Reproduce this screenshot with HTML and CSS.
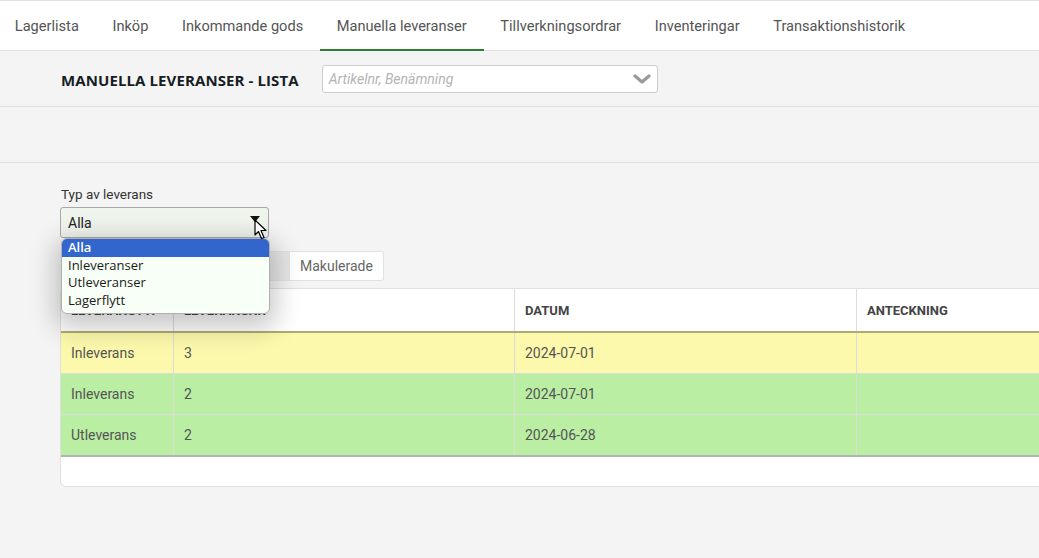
FILE: index.html
```html
<!DOCTYPE html>
<html>

<head>
  <title>Manuella leveranser</title>
  <meta name="viewport" content="width=device-width, initial-scale=1" />
  <link rel="stylesheet" href="styles.css">
</head>

<body>

  <nav class="tabs">
    <a class="tab">Lagerlista</a>
    <a class="tab">Inköp</a>
    <a class="tab">Inkommande gods</a>
    <a class="tab active">Manuella leveranser</a>
    <a class="tab">Tillverkningsordrar</a>
    <a class="tab">Inventeringar</a>
    <a class="tab">Transaktionshistorik</a>
  </nav>

  <div class="band header-band">
    <h1 class="page-title">MANUELLA LEVERANSER - LISTA</h1>
    <div class="search">
      <span class="placeholder">Artikelnr, Benämning</span>
      <svg class="chevron" width="18" height="12" viewBox="0 0 18 12">
        <path d="M2 3 L9 9 L16 3" fill="none" stroke="#9a9a9a" stroke-width="3.2" stroke-linecap="round" stroke-linejoin="round" />
      </svg>
    </div>
  </div>

  <div class="band empty-band"></div>

  <main class="content">
    <div class="filter">
      <label class="filter-label">Typ av leverans</label>
      <div class="select-wrap">
        <div class="select">
          <span>Alla</span>
          <svg class="select-arrow" width="10" height="6" viewBox="0 0 10 6">
            <path d="M0 0 H10 L5 6 Z" fill="#111" />
          </svg>
        </div>
        <!-- open native dropdown -->
        <ul class="options">
          <li class="selected">Alla</li>
          <li>Inleveranser</li>
          <li>Utleveranser</li>
          <li>Lagerflytt</li>
        </ul>
        <svg class="cursor" width="14" height="21" viewBox="0 0 14 21">
          <path d="M1 1 L1 16 L4.5 12.5 L7.5 19.5 L10 18.5 L7 11.5 L12 11.5 Z" fill="#fff" stroke="#000" stroke-width="1.2" stroke-linejoin="round" />
        </svg>
      </div>
    </div>

    <div class="btn-group">
      <button class="btn">Aktiva</button>
      <button class="btn active">Alla</button>
      <button class="btn">Makulerade</button>
    </div>

    <div class="card">
      <table class="list">
        <thead>
          <tr>
            <th class="c1">LEVERANSTYP</th>
            <th class="c2">LEVERANSNR</th>
            <th class="c3">DATUM</th>
            <th class="c4">ANTECKNING</th>
          </tr>
        </thead>
        <tbody>
          <tr class="pending">
            <td>Inleverans</td>
            <td>3</td>
            <td>2024-07-01</td>
            <td></td>
          </tr>
          <tr class="done">
            <td>Inleverans</td>
            <td>2</td>
            <td>2024-07-01</td>
            <td></td>
          </tr>
          <tr class="done">
            <td>Utleverans</td>
            <td>2</td>
            <td>2024-06-28</td>
            <td></td>
          </tr>
        </tbody>
      </table>
    </div>
  </main>

</body>

</html>
```

FILE: styles.css
```css
html {
  background-color: #f4f4f4;
  overflow: hidden;
}

body {
  margin: 0;
  width: 100vw;
  height: 100vh;
  overflow: hidden;
  font-family: Roboto, "Liberation Sans", sans-serif;
  color: #555;
}

.tabs {
  display: flex;
  height: 49px;
  background-color: #fff;
  border-top: 1px solid #e2e2e2;
  border-bottom: 1px solid #e2e2e2;
  margin-left: -2px;
}

.tab {
  display: flex;
  align-items: center;
  padding: 0 16.8px;
  font-size: 14.6px;
  color: #555;
  border-bottom: 2px solid transparent;
  margin-bottom: -1px;
  padding-top: 1px;
}

.tab.active {
  border-bottom-color: #2e7d32;
}

.band {
  height: 55px;
  border-bottom: 1px solid #e0e0e0;
  background-color: #f4f4f4;
}

.header-band {
  display: flex;
  align-items: center;
  padding-left: 61px;
}

.page-title {
  margin: 0 23px 0 0;
  font-family: "Open Sans", sans-serif;
  font-size: 15px;
  font-weight: 700;
  color: #161e24;
  letter-spacing: 0.1px;
  padding-top: 2px;
}

.search {
  width: 322px;
  height: 26px;
  background-color: #fff;
  border: 1px solid #ccc;
  border-radius: 3px;
  display: flex;
  align-items: center;
  justify-content: space-between;
  padding: 0 6px 0 6px;
  box-sizing: content-box;
}

.placeholder {
  font-style: italic;
  font-size: 14px;
  color: #b4b4b4;
}

.chevron {
  margin-top: 1px;
}

.content {
  padding: 23px 0 0 60px;
}

.filter-label {
  display: block;
  font-size: 13.5px;
  color: #333;
  margin-left: 1px;
  margin-bottom: 5px;
}

.select-wrap {
  position: relative;
  width: 209px;
}

.select {
  height: 29px;
  border: 1px solid #a9a9a9;
  border-radius: 3px;
  background-color: #eff4ed;
  display: flex;
  align-items: center;
  justify-content: space-between;
  padding: 0 7px 0 7px;
  font-size: 14px;
  color: #222;
}

.select-arrow {
  margin-top: -8px;
  margin-right: 1px;
}

.options {
  position: absolute;
  top: 31px;
  left: 1px;
  width: 207px;
  margin: 0;
  padding: 0 0 4px 0;
  list-style: none;
  background-color: #f8fff6;
  border: 1px solid #b0b0b0;
  border-radius: 6px;
  box-shadow: 0 8px 26px 6px rgba(0, 0, 0, 0.22);
  overflow: hidden;
  z-index: 10;
  font-family: "Open Sans", sans-serif;
  font-size: 13px;
  color: #1a1a1a;
}

.options li {
  height: 17.5px;
  line-height: 17.5px;
  padding-left: 6px;
}

.options li.selected {
  background-color: #3366cc;
  color: #fff;
  font-weight: 600;
}

.cursor {
  position: absolute;
  top: 12px;
  left: 194px;
  z-index: 11;
}

.btn-group {
  display: flex;
  margin-top: 13px;
  margin-left: 50px;
}

.btn {
  height: 30px;
  min-width: 90px;
  padding: 0 10px;
  font-family: Roboto, sans-serif;
  font-size: 14px;
  color: #666;
  background-color: #fff;
  border: 1px solid #e2e2e2;
  border-left: none;
  border-radius: 0;
}

.btn:first-child {
  border-left: 1px solid #e2e2e2;
  border-radius: 3px 0 0 3px;
}

.btn:last-child {
  border-radius: 0 3px 3px 0;
  min-width: 91px;
}

.btn.active {
  background-color: #e6e6e6;
}

.card {
  margin-top: 7px;
  width: 1200px;
  height: 197px;
  background-color: #fff;
  border: 1px solid #e0e0e0;
  border-radius: 6px;
  overflow: hidden;
}

.list {
  border-collapse: collapse;
  table-layout: fixed;
  width: 100%;
}

.list th {
  height: 41px;
  text-align: left;
  padding: 0 10px;
  font-size: 13px;
  font-weight: 700;
  color: #444;
  border-right: 1px solid #dcdcdc;
  border-bottom: 2px solid #b1ab6f;
  padding-top: 1px;
}

.list .c1 {
  width: 92px;
}

.list .c2 {
  width: 320px;
}

.list .c3 {
  width: 321px;
}

.list td {
  height: 40px;
  padding: 0 10px;
  font-size: 14px;
  color: #555;
  border-right: 1px solid #dcdcdc;
  border-bottom: 1px solid #dcdcdc;
}

.list tr.pending td {
  background-color: #fcf9ac;
}

.list tr.done td {
  background-color: #b9eea3;
}

.list tbody tr:last-child td {
  border-bottom: 2px solid #b2b2b2;
}
```
